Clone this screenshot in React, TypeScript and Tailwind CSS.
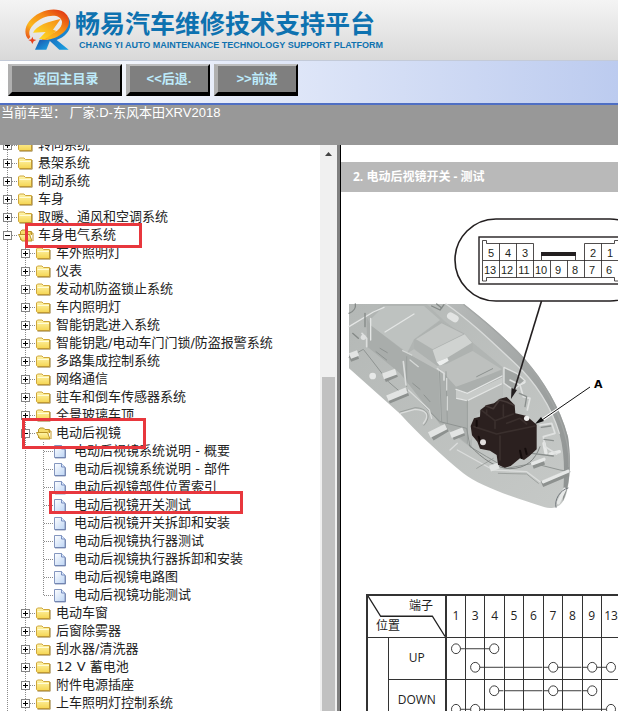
import { clsx } from "clsx";

type TreeItem = {
  label: string;
  level: 0 | 1 | 2;
  open?: boolean;
  last?: boolean;
  mark?: string;
};

const items: TreeItem[] = [
  { label: "转向系统", level: 0 },
  { label: "悬架系统", level: 0 },
  { label: "制动系统", level: 0 },
  { label: "车身", level: 0 },
  { label: "取暖、通风和空调系统", level: 0 },
  {
    label: "车身电气系统",
    level: 0,
    open: true,
    mark: "left-[25px] -top-[3px] w-[117px] h-[25px]",
  },
  { label: "车外照明灯", level: 1 },
  { label: "仪表", level: 1 },
  { label: "发动机防盗锁止系统", level: 1 },
  { label: "车内照明灯", level: 1 },
  { label: "智能钥匙进入系统", level: 1 },
  { label: "智能钥匙/电动车门门锁/防盗报警系统", level: 1 },
  { label: "多路集成控制系统", level: 1 },
  { label: "网络通信", level: 1 },
  { label: "驻车和倒车传感器系统", level: 1 },
  { label: "全景玻璃车顶", level: 1 },
  {
    label: "电动后视镜",
    level: 1,
    open: true,
    mark: "left-[22px] -top-[6px] w-[124px] h-[31px]",
  },
  { label: "电动后视镜系统说明 - 概要", level: 2 },
  { label: "电动后视镜系统说明 - 部件", level: 2 },
  { label: "电动后视镜部件位置索引", level: 2 },
  {
    label: "电动后视镜开关测试",
    level: 2,
    mark: "left-[49px] -top-[5px] w-[194px] h-[23px]",
  },
  { label: "电动后视镜开关拆卸和安装", level: 2 },
  { label: "电动后视镜执行器测试", level: 2 },
  { label: "电动后视镜执行器拆卸和安装", level: 2 },
  { label: "电动后视镜电路图", level: 2 },
  { label: "电动后视镜功能测试", level: 2, last: true },
  { label: "电动车窗", level: 1 },
  { label: "后窗除雾器", level: 1 },
  { label: "刮水器/清洗器", level: 1 },
  { label: "12 V 蓄电池", level: 1 },
  { label: "附件电源插座", level: 1 },
  { label: "上车照明灯控制系统", level: 1 },
];

const pins = ["1", "3", "4", "5", "6", "7", "8", "9", "13"];

// each track is the list of pins joined by one line
const positions = [
  { name: "UP", tracks: [["1", "4"], ["3", "7", "9", "13"]] },
  { name: "DOWN", tracks: [["4", "7", "9"], ["1", "3", "13"]] },
];

function Logo() {
  return (
    <svg viewBox="0 0 138 126" className="w-[46px] h-[42px] shrink-0" aria-hidden="true">
      <defs>
        <linearGradient id="ring" x1="0" y1="1" x2="1" y2="0">
          <stop offset="0" stopColor="#e5401a" />
          <stop offset="0.3" stopColor="#fbb81c" />
          <stop offset="0.6" stopColor="#f58a16" />
          <stop offset="1" stopColor="#dd2414" />
        </linearGradient>
        <linearGradient id="bolt" x1="1" y1="0" x2="0" y2="1">
          <stop offset="0" stopColor="#f58a16" />
          <stop offset="1" stopColor="#ffe526" />
        </linearGradient>
        <linearGradient id="leg" x1="0" y1="0" x2="1" y2="1">
          <stop offset="0" stopColor="#1b4fa8" />
          <stop offset="1" stopColor="#18a6e6" />
        </linearGradient>
      </defs>
      <path d="M130 24C147 56 125 83 95 93L131 122L103 122L65 87C103 80 130 59 130 24Z" fill="url(#leg)" />
      <path d="M44 92L76 92L64 122L30 122Z" fill="url(#leg)" />
      <path
        fillRule="evenodd"
        d="M10 91C-10 67 5 31 46 11C86 -8 129 2 132 35C134 64 97 94 50 93L60 78C90 76 112 58 111 38C107 18 81 15 53 27C24 41 5 65 16 84Z"
        fill="url(#ring)"
      />
      <path d="M107 30L84 62L94 66L60 90L42 90L62 69L24 71C34 50 70 37 107 30Z" fill="url(#bolt)" />
      <path d="M22 83L25 91L34 93L26 97L22 105L18 97L10 93L19 91Z" fill="#e8401c" />
    </svg>
  );
}

function Toolbar() {
  const button =
    "h-8 bg-[#7f7f7f] border-t-2 border-l-4 border-r-2 border-b-4 border-t-[#bdbdbd] border-l-[#b0b0b0] border-r-black border-b-black text-[13px] leading-4 font-bold text-[#bdeafa]";
  return (
    <nav className="flex items-start gap-1 h-[46px] px-2 pt-[3px] border-t border-t-[#c3cad8] border-b-2 border-b-[#4f6fc4] bg-linear-to-r from-white to-[#bccbef]">
      <button type="button" className={clsx(button, "w-[114px]")}>返回主目录</button>
      <button type="button" className={clsx(button, "w-[84px]")}>&lt;&lt;后退.</button>
      <button type="button" className={clsx(button, "w-[84px]")}>&gt;&gt;前进</button>
    </nav>
  );
}

function Guide({ end = false, branch = false }) {
  return (
    <svg viewBox="0 0 18 18" className="size-[18px] shrink-0" shapeRendering="crispEdges" aria-hidden="true">
      <path d={end ? "M7.5 0V10" : "M7.5 0V18"} stroke="#8a8a8a" strokeDasharray="1 1" />
      {branch && <path d="M8 9.5H18" stroke="#8a8a8a" strokeDasharray="1 1" />}
    </svg>
  );
}

function Expander({ open = false }) {
  return (
    <svg viewBox="0 0 18 18" className="size-[18px] shrink-0" shapeRendering="crispEdges" aria-hidden="true">
      <path d="M7.5 0V18M12 9.5H18" stroke="#8a8a8a" strokeDasharray="1 1" />
      <rect x="3.5" y="5.5" width="8" height="8" fill="#fff" stroke="#848484" />
      <path d={open ? "M5 9.5H10" : "M5 9.5H10M7.5 7V12"} stroke="#000" />
    </svg>
  );
}

function Folder({ open = false }) {
  return (
    <svg viewBox="0 0 18 18" className="size-[18px] shrink-0" aria-hidden="true">
      <defs>
        <linearGradient id="folder" x1="0" y1="0" x2="0" y2="1">
          <stop offset="0" stopColor="#fff6ae" />
          <stop offset="1" stopColor="#f5d552" />
        </linearGradient>
      </defs>
      {open ? (
        <>
          <path d="M2.5 14V5.5L4 4H7.5L9 5.5H13.5V9" fill="#f6dc6c" stroke="#b9942a" />
          <path d="M0.5 8.5H11.5L14 15H4Z" fill="url(#folder)" stroke="#b9942a" />
          <path d="M12 7H15V15" fill="none" stroke="#c49a28" />
        </>
      ) : (
        <>
          <path d="M0.5 13.5V5L1.5 4H6L7.5 5.5H13.5V14.5H1.5Z" fill="url(#folder)" stroke="#cfa63a" />
          <path d="M1.5 7.5H13" stroke="#fffbd6" />
          <path d="M1.5 15.2H14.2V6" fill="none" stroke="#8a6a1c" strokeWidth="0.7" />
        </>
      )}
    </svg>
  );
}

function Page() {
  return (
    <svg viewBox="0 0 18 18" className="size-[18px] shrink-0" aria-hidden="true">
      <defs>
        <linearGradient id="page" x1="0" y1="0" x2="1" y2="1">
          <stop offset="0" stopColor="#fff" />
          <stop offset="1" stopColor="#bcd4f4" />
        </linearGradient>
      </defs>
      <path d="M0.5 3.5H7.5L11 7V15.500H0.5Z" fill="url(#page)" stroke="#8496bf" />
      <path d="M7.5 3.5V7H11" fill="#dce8fa" stroke="#5f7ab4" strokeWidth="0.8" />
      <path d="M1 16H11.5V7.5" fill="none" stroke="#4a5f92" strokeWidth="0.6" />
    </svg>
  );
}

function TreeRow({ item }: { item: TreeItem }) {
  const { label, level, open, last, mark } = item;
  return (
    <li className="relative flex h-[18px] items-center whitespace-nowrap">
      {level > 0 && <Guide />}
      {level > 1 && <Guide />}
      {level === 2 ? (
        <Guide branch end={last} />
      ) : (
        <button type="button" aria-label={label} aria-expanded={!!open}>
          <Expander open={open} />
        </button>
      )}
      <a href="#" className="flex items-center gap-0.5 text-[13px] leading-[18px] text-[#222]">
        {level === 2 ? <Page /> : <Folder open={open} />}
        {label}
      </a>
      {mark && (
        <span className={clsx("absolute z-10 border-3 border-[#e8373d] pointer-events-none", mark)} />
      )}
    </li>
  );
}

function Scrollbar() {
  return (
    <div className="flex w-[17px] shrink-0 flex-col items-center bg-[#f0f0f0]">
      <svg viewBox="0 0 17 17" className="size-[17px] shrink-0" aria-hidden="true">
        <path d="M5 11L8.5 7L12 11Z" fill="#444" />
      </svg>
      <div className="basis-[38%] shrink-0" />
      <div className="w-[13px] grow bg-[#c1c1c1]" />
    </div>
  );
}

const connectorPins = [
  { n: "5", x: 491, y: 257 },
  { n: "4", x: 508, y: 257 },
  { n: "3", x: 525, y: 257 },
  { n: "2", x: 593, y: 257 },
  { n: "1", x: 610, y: 257 },
  { n: "13", x: 490, y: 274 },
  { n: "12", x: 507, y: 274 },
  { n: "11", x: 524, y: 274 },
  { n: "10", x: 541, y: 274 },
  { n: "9", x: 558, y: 274 },
  { n: "8", x: 575, y: 274 },
  { n: "7", x: 592, y: 274 },
  { n: "6", x: 609, y: 274 },
];

function SwitchDrawing() {
  return (
    <svg
      viewBox="341 192 277 402"
      className="block h-[402px] w-[277px] overflow-visible"
      role="img"
      aria-label="电动后视镜开关"
    >
      <defs>
        <linearGradient id="shell" x1="0" y1="0" x2="1" y2="1">
          <stop offset="0" stopColor="#b4b8b6" />
          <stop offset="1" stopColor="#c6c9c7" />
        </linearGradient>
        <linearGradient id="rim" x1="0" y1="0" x2="1" y2="1">
          <stop offset="0" stopColor="#b7bab9" />
          <stop offset="1" stopColor="#8d9190" />
        </linearGradient>
      </defs>

      <g transform="translate(340 290) scale(0.33333)" strokeLinejoin="round" strokeLinecap="round">
        <path
          d="M27 42H372C430 88 505 150 555 207C610 270 660 350 684 440C697 520 688 615 666 638C653 655 630 657 612 651C530 625 420 590 370 550C310 500 240 437 180 371L27 235Z"
          fill="url(#shell)"
        />
        <path
          d="M365 42C430 88 505 150 555 207C610 270 660 350 684 440C695 520 690 590 668 635C672 570 678 500 658 430C634 350 585 275 527 222C450 150 390 92 318 42Z"
          fill="url(#rim)"
        />
        <path d="M372 44C470 120 550 195 598 270C650 350 690 440 687 530" fill="none" stroke="#a3a6a5" strokeWidth="4" />
        <path d="M318 42C390 92 450 150 527 222C585 275 634 350 658 430" fill="none" stroke="#d9dbda" strokeWidth="4" />

        {/* molded housing */}
        <path d="M80 80L130 42H260L312 92L395 155L488 232V320L400 380L395 475L305 405L182 245L80 160Z" fill="#b1b5b3" />
        <path d="M90 90L132 48H252L300 90L222 148L202 188L90 105Z" fill="#bec2c0" />
        <path d="M80 82L92 106L200 190L295 235L302 405L180 250L82 170Z" fill="#a9adab" />
        <path d="M135 126L222 72M27 110L100 66L132 52M92 85V150" fill="none" stroke="#e4e6e5" strokeWidth="4" />
        <path d="M222 150L300 94L372 130L398 158V182L320 220L290 230L222 175Z" fill="#aeb2b0" />
        <path d="M228 148L305 100L370 132L278 178Z" fill="#c3c6c4" />
        <path d="M278 180L374 133L396 158L322 203L290 216Z" fill="#d0d3d1" />
        <path d="M290 216L322 203L326 212L300 228Z" fill="#eceeed" />
        <path d="M202 190L222 178L292 228L320 222L398 183L485 238L350 298L292 240Z" fill="#bdc0be" />
        <path d="M298 235L348 290L486 240V300L380 355V460L305 400Z" fill="#abafad" />
        <path d="M382 332L488 280V320L420 360L392 408L400 440L382 462Z" fill="#b9bcba" />
        <path d="M348 300L382 312L488 262V280L382 330L348 325Z" fill="#c8cbc9" />
        <path d="M348 298L382 310L486 258M350 325L382 332L484 282" fill="none" stroke="#e3e5e4" strokeWidth="4" />
        <path d="M382 332V460M298 238L305 395M318 245L322 398M200 200V290" fill="none" stroke="#9a9f9d" strokeWidth="3" />
        <path d="M292 236L312 250V270M190 215L198 285M66 130L80 145V170" fill="none" stroke="#dcdedd" strokeWidth="5" />
        <path d="M410 260L458 236M108 185L140 210M218 280L240 298M252 315L270 335M120 175L142 188" stroke="#8d9290" strokeWidth="3" />
        <path d="M320 265V300M322 320V360M188 182L215 195M210 210L235 230" fill="none" stroke="#d5d8d6" strokeWidth="4" />

        {/* lower flange */}
        <path
          d="M27 202L70 178L95 210L145 275L180 305L205 300L250 345L300 395L380 415L390 470L440 500L500 535L580 520L660 540L690 545"
          fill="none"
          stroke="#8f9492"
          strokeWidth="3"
        />
        <path d="M205 300L268 360L275 385M180 370L225 358C260 360 270 375 250 400M330 480L352 460M352 480L460 540L560 545L600 575" fill="none" stroke="#dbdddc" strokeWidth="4" />
        <path d="M180 366L225 353C262 354 277 378 252 406M410 535L460 505M475 550L560 552L595 580" fill="none" stroke="#8b8f8d" strokeWidth="2" />
        <path d="M388 465C430 510 470 535 510 536C560 535 585 510 600 470" fill="none" stroke="#7d8280" strokeWidth="3" />

        {/* ribs and clips */}
        <g stroke="#8d918f" strokeWidth="18" strokeLinecap="butt">
          <path d="M146 332L204 308M276 444L322 416M338 442L372 428M30 207L54 198" />
          <path d="M606 583L684 550M578 528L612 515M134 268L170 252" />
        </g>
        <g stroke="#e2e4e3" strokeWidth="18" strokeLinecap="butt">
          <path d="M142 325L200 301M268 435L318 410M332 436L370 421M30 198L54 189" />
          <path d="M129 259L168 245M450 536L476 527" />
        </g>
        <path d="M610 575L684 544M578 521L612 508M630 492L658 485M612 460L618 490M534 284L552 276M655 638L674 598" stroke="#e6e8e7" strokeWidth="10" />
        <path d="M332 78L345 86" stroke="#e2e4e3" strokeWidth="22" />
        <circle cx="98" cy="258" r="10" fill="#e7e9e8" />
        <circle cx="70" cy="142" r="8" fill="#dfe1e0" />
        <path d="M275 48L300 60L312 44M290 42L305 54M27 70C42 64 48 52 46 42M75 70V110M38 130L55 145" fill="none" stroke="#848987" strokeWidth="4" />
        <path d="M492 232L530 250L555 272L520 300L492 280Z" fill="#a0a4a2" stroke="#dfe1e0" strokeWidth="4" />
        <path d="M510 270L540 285L550 320L570 325L562 360M600 405L635 400L645 430L610 440L615 470L650 492" fill="none" stroke="#dfe1e0" strokeWidth="5" />
        <path d="M538 310L560 320L555 350M604 412L632 408M575 490L640 498M612 448L640 452" fill="none" stroke="#8a8f8d" strokeWidth="4" />
        <path d="M648 652C642 630 660 600 684 594" fill="none" stroke="#70757a" strokeWidth="3" />

        {/* switch body */}
        <path
          d="M421 360L440 345L462 340L480 326L500 321L524 345L526 370L560 378L590 404V478L568 498L552 510L540 505L512 528L494 533L474 524L470 495L450 482L420 476L412 455L396 436L392 408L402 385L420 380Z"
          fill="#2b201f"
        />
        <path d="M438 348L460 356L478 330L500 336L520 345" fill="none" stroke="#453937" strokeWidth="5" />
        <path d="M426 362L465 392L520 372M465 392V415M440 360V374M490 345V378M402 410L470 432L585 408M480 438V510M500 400L540 385L560 402" fill="none" stroke="#3a2f2d" strokeWidth="5" />
        <path d="M540 482L545 504M556 476L560 492M410 392V408M416 440L422 462" fill="none" stroke="#140c0b" strokeWidth="6" />
        <circle cx="429" cy="457" r="9" fill="#e2dedd" />
        <circle cx="560" cy="385" r="8" fill="#efeeed" />
      </g>

      {/* connector */}
      <rect x="455" y="219" width="196" height="82" rx="41" fill="#fff" stroke="#231f20" strokeWidth="1.6" />
      <rect x="479" y="237" width="144" height="47" fill="#fff" stroke="#231f20" strokeWidth="1.4" />
      <g fill="none" stroke="#231f20" strokeWidth="0.8">
        <path d="M482.5 260.5V240.5H486.5V243.5H533.5V277.5H486.5V281H482.5V260.5H618.5" />
        <path d="M499.5 243.5V277.5M516.5 243.5V277.5M550.5 260.5V277.5M567.5 260.5V277.5" />
        <path d="M533.5 277.5H614.5V281H618.5V240.5H614.5V243.5H584.5V277.5M601.5 243.5V277.5" />
        <path d="M541.5 260V253M575.5 260V253" />
      </g>
      <rect x="541" y="252" width="35" height="4" fill="#231f20" />
      <g fill="#231f20" fontSize="11" textAnchor="middle" fontFamily="'Liberation Sans', Arial, sans-serif">
        {connectorPins.map((p) => (
          <text key={p.n} x={p.x} y={p.y}>
            {p.n}
          </text>
        ))}
      </g>

      <path d="M541.5 301L514 391" stroke="#231f20" strokeWidth="1.6" />
      <path d="M511 399L511.5 388L517 390Z" fill="#231f20" />
      <path d="M570 401L542 420" stroke="#fff" strokeWidth="3" />
      <path d="M590 387L542 420" stroke="#111" strokeWidth="1" />
      <path d="M535 424L541 417L544 421Z" fill="#111" />
      <text x="594" y="388" fontSize="11" fontWeight="bold" fontFamily="'DejaVu Sans', Verdana, sans-serif">
        A
      </text>
    </svg>
  );
}

function Mark({ pin, tracks }: { pin: number; tracks: string[][] }) {
  return (
    <svg viewBox="0 0 20 42" className="block h-[41px] w-full overflow-visible" preserveAspectRatio="none" aria-hidden="true">
      {tracks.map((track, i) => {
        const y = i === 0 ? 11 : 30;
        const first = pins.indexOf(track[0]);
        const end = pins.indexOf(track[track.length - 1]);
        if (pin < first || pin > end) return null;
        return (
          <g key={i} stroke="#333" fill="#fff">
            <path d={`M${pin === first ? 10 : 0} ${y}H${pin === end ? 10 : 20}`} />
            {track.includes(pins[pin]) && <circle cx="10" cy={y} r="5" />}
          </g>
        );
      })}
    </svg>
  );
}

function PinTable() {
  return (
    <table className="ml-[25px] w-[256px] table-fixed border-collapse border-2 border-[#333] text-xs text-[#222]">
      <colgroup>
        <col className="w-[21px]" />
        <col className="w-[58px]" />
        {pins.map((pin) => (
          <col key={pin} />
        ))}
      </colgroup>
      <thead>
        <tr className="h-[42px]">
          <th colSpan={2} className="relative border border-r-2 border-[#333] p-0 font-normal">
            <svg viewBox="0 0 79 42" className="absolute inset-0 size-full" preserveAspectRatio="none" aria-hidden="true">
              <path d="M0 0L13 21H66L79 42" fill="none" stroke="#222" strokeWidth="1.3" />
            </svg>
            <div className="pr-3 text-right leading-5">端子</div>
            <div className="pl-2 text-left leading-5">位置</div>
          </th>
          {pins.map((pin) => (
            <th key={pin} className="border border-[#333] p-0 font-normal">{pin}</th>
          ))}
        </tr>
      </thead>
      <tbody>
        {positions.map((row, i) => (
          <tr key={row.name}>
            {i === 0 && <td rowSpan={positions.length} className="border border-[#333]" />}
            <th className="border border-r-2 border-[#333] p-0 font-normal">{row.name}</th>
            {pins.map((pin, n) => (
              <td key={pin} className="border border-[#333] p-0">
                <Mark pin={n} tracks={row.tracks} />
              </td>
            ))}
          </tr>
        ))}
      </tbody>
    </table>
  );
}

export default function App() {
  return (
    <div className="flex h-screen flex-col overflow-hidden bg-white font-['Liberation_Sans','Noto_Sans_CJK_SC',sans-serif]">
      <header className="flex h-[60px] shrink-0 items-center bg-linear-to-b from-[#f4f4f4] to-[#d9d9d9] pl-[25px] gap-1">
        <Logo />
        <div className="whitespace-nowrap text-[#0e72b0]">
          <h1 className="text-[25px] leading-[30px] font-bold">畅易汽车维修技术支持平台</h1>
          <p className="pl-1 text-[9px] leading-3 font-bold">CHANG YI AUTO MAINTENANCE TECHNOLOGY SUPPORT PLATFORM</p>
        </div>
      </header>
      <Toolbar />
      <p className="h-10 shrink-0 bg-[#989898] pl-px text-[13px] leading-4 text-white">
        当前车型： 厂家:D-东风本田XRV2018
      </p>

      <div className="flex min-h-0 grow">
        <aside className="flex w-[337px] shrink-0">
          <div className="min-w-0 grow overflow-hidden font-['DejaVu_Sans','Noto_Sans_CJK_SC',sans-serif]">
            <ul className="-mt-[9px]">
              {items.map((item) => (
                <TreeRow key={item.label} item={item} />
              ))}
            </ul>
          </div>
          <Scrollbar />
        </aside>
        <div className="w-1 shrink-0 border-r border-black bg-[#808080]" />
        <main className="min-w-0 grow overflow-hidden pt-[17px] font-['Open_Sans','Noto_Sans_CJK_SC',sans-serif]">
          <h2 className="h-[30px] bg-[#b9b9b9] pl-3 text-xs leading-[30px] font-bold text-white">
            2. 电动后视镜开关 - 测试
          </h2>
          <SwitchDrawing />
          <PinTable />
        </main>
      </div>
    </div>
  );
}
